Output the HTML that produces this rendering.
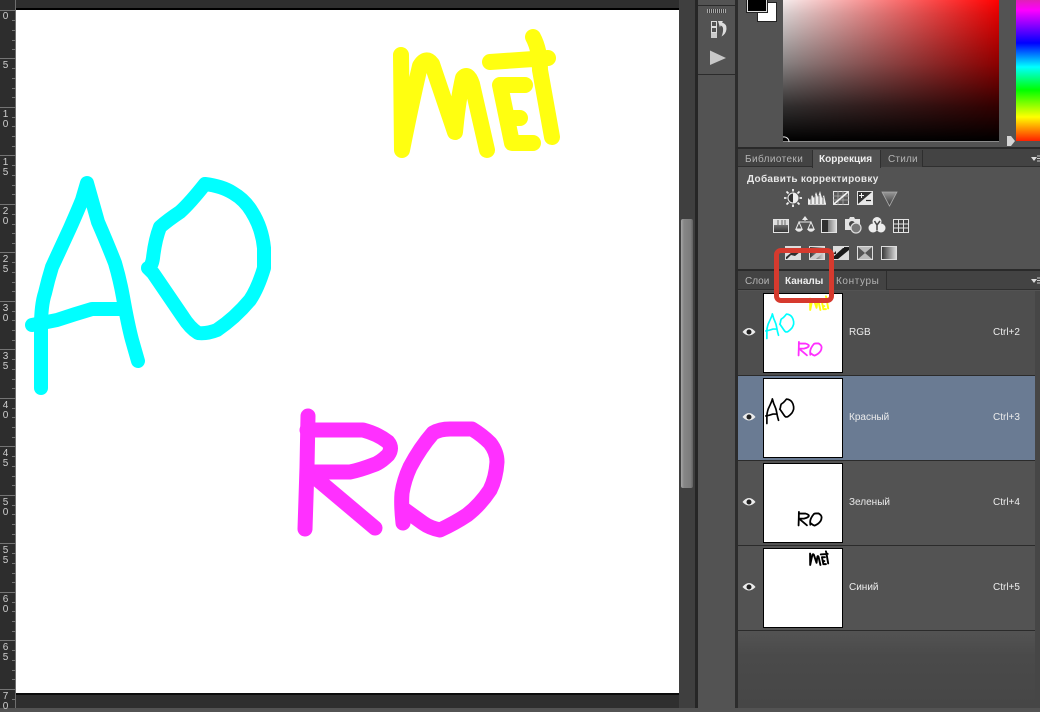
<!DOCTYPE html>
<html><head><meta charset="utf-8">
<style>
html,body{margin:0;padding:0;width:1040px;height:708px;overflow:hidden;background:#535353;font-family:"Liberation Sans",sans-serif}
.a{position:absolute}
.t{position:absolute;font-size:10px;line-height:12px;white-space:nowrap;color:#b4b4b4}
.b{font-weight:bold;color:#eee}
.tab{position:absolute;background:#434343;border-right:1px solid #2e2e2e;box-sizing:border-box}
.row{position:absolute;left:738px;width:297px;height:84px;background:#535353;border-bottom:1px solid #2b2b2b;box-sizing:content-box}
.th{position:absolute;left:763px;width:78px;height:78px;border:1px solid #000;background:#fff}
.lb{position:absolute;left:849px;font-size:10px;line-height:12px;color:#ececec;white-space:nowrap}
.sc{position:absolute;left:993px;font-size:10px;line-height:12px;color:#ececec;white-space:nowrap}
.d{position:absolute;left:1px;width:9px;font-size:10px;line-height:10px;color:#cfcfcf;text-align:center}
</style></head><body>

<!-- top band and canvas area -->
<div class="a" style="left:0;top:0;width:696px;height:708px;background:#2f2f2f"></div>
<div class="a" style="left:16px;top:0;width:663px;height:9px;background:#2e2e2e"></div>
<div class="a" style="left:16px;top:8px;width:663px;height:2px;background:#000"></div>
<div class="a" style="left:16px;top:693px;width:663px;height:2px;background:#0c0c0c"></div>

<!-- ruler -->
<div class="a" style="left:0;top:0;width:16px;height:708px;background:#2d2d2d;border-right:1px solid #6e6e6e;box-sizing:border-box"></div>
<svg class="a" style="left:0;top:0" width="16" height="708">
<g stroke="#747474" stroke-width="1">
<path d="M0 10.500H16M0 58.500H16M0 107.500H16M0 155.500H16M0 204.500H16M0 252.500H16M0 301.500H16M0 349.500H16M0 398.500H16M0 446.500H16M0 495.500H16M0 543.500H16M0 592.500H16M0 640.500H16M0 689.500H16"/>
<path d="M12 20.500H16M12 30.500H16M12 40.500H16M12 49.500H16M12 68.500H16M12 78.500H16M12 88.500H16M12 97.500H16M12 117.500H16M12 126.500H16M12 136.500H16M12 146.500H16M12 165.500H16M12 175.500H16M12 185.500H16M12 194.500H16M12 214.500H16M12 224.500H16M12 233.500H16M12 243.500H16M12 262.500H16M12 272.500H16M12 282.500H16M12 291.500H16M12 311.500H16M12 320.500H16M12 330.500H16M12 340.500H16M12 359.500H16M12 369.500H16M12 379.500H16M12 388.500H16M12 408.500H16M12 417.500H16M12 427.500H16M12 437.500H16M12 456.500H16M12 466.500H16M12 476.500H16M12 485.500H16M12 505.500H16M12 514.500H16M12 524.500H16M12 534.500H16M12 553.500H16M12 563.500H16M12 573.500H16M12 582.500H16M12 602.500H16M12 611.500H16M12 621.500H16M12 631.500H16M12 650.500H16M12 660.500H16M12 670.500H16M12 679.500H16M12 699.500H16"/>
</g></svg>
<div class="d" style="top:12px">0</div>
<div class="d" style="top:61px">5</div>
<div class="d" style="top:110px">1</div><div class="d" style="top:120px">0</div>
<div class="d" style="top:158px">1</div><div class="d" style="top:168px">5</div>
<div class="d" style="top:207px">2</div><div class="d" style="top:217px">0</div>
<div class="d" style="top:255px">2</div><div class="d" style="top:265px">5</div>
<div class="d" style="top:304px">3</div><div class="d" style="top:314px">0</div>
<div class="d" style="top:352px">3</div><div class="d" style="top:362px">5</div>
<div class="d" style="top:401px">4</div><div class="d" style="top:411px">0</div>
<div class="d" style="top:449px">4</div><div class="d" style="top:459px">5</div>
<div class="d" style="top:498px">5</div><div class="d" style="top:508px">0</div>
<div class="d" style="top:546px">5</div><div class="d" style="top:556px">5</div>
<div class="d" style="top:595px">6</div><div class="d" style="top:605px">0</div>
<div class="d" style="top:643px">6</div><div class="d" style="top:653px">5</div>
<div class="d" style="top:692px">7</div><div class="d" style="top:702px">0</div>

<!-- canvas -->
<svg class="a" style="left:16px;top:10px" width="663" height="683" viewBox="16 10 663 683">
<defs>
<g id="ao" fill="none" stroke="#00ffff" stroke-width="14" stroke-linecap="round" stroke-linejoin="round">
<path d="M41 388L41 327Q41 305 45 293Q48 280 52 267L70 228Q78 210 82 200L87 183L98 222Q108 245 115 263Q120 280 123 297Q128 325 132 340L138 361"/>
<path d="M32 325L57 320Q75 314 92 309L120 309"/>
<path d="M148 268Q152 266 153 258Q155 240 160 227Q168 220 180 212Q190 203 205 184Q222 186 233 193Q245 200 252 212Q262 228 264 248L264 268Q258 288 250 300Q235 318 217 330Q207 334 198 333Q190 328 183 317L153 273Z"/>
</g>
<g id="ro" fill="none" stroke="#ff30ff" stroke-width="15" stroke-linecap="round" stroke-linejoin="round">
<path d="M308 416L307 467L305 529"/>
<path d="M307 430L363 430Q378 434 388 442Q393 448 388 455Q380 463 373 465Q360 470 350 472L310 472"/>
<path d="M318 480L375 528"/>
<path d="M403 523Q401 505 402 493Q404 480 410 467Q420 448 433 433Q440 429 450 429L472 429Q482 435 490 443Q497 452 497 462Q496 478 490 490Q480 505 467 515Q455 523 440 530Q430 528 423 523L405 510"/>
</g>
<g id="met" fill="none" stroke="#ffff10" stroke-width="16" stroke-linecap="round" stroke-linejoin="round">
<path d="M401 55L402 150Q412 100 420 66Q426 56 432 64L455 132Q458 100 463 78Q468 72 472 84L487 150"/>
<path d="M500 85L525 85M500 85L512 143L533 143M512 118L520 118"/>
<path d="M533 37Q540 50 540 70L552 137M490 62L548 58"/>
</g>
</defs>
<rect x="16" y="10" width="663" height="683" fill="#fff"/>
<use href="#ao"/><use href="#ro"/><use href="#met"/>
</svg>

<!-- scrollbar -->
<div class="a" style="left:679px;top:0;width:17px;height:708px;background:#3f3f3f;box-sizing:border-box;border-right:1px solid #333"></div>
<div class="a" style="left:681px;top:219px;width:12px;height:269px;border-radius:2px;background:linear-gradient(to right,#a5a5a5,#868686 25%,#7c7c7c 80%,#606060)"></div>

<!-- dock strip -->
<div class="a" style="left:695px;top:0;width:3px;height:708px;background:#262626"></div>
<div class="a" style="left:698px;top:0;width:38px;height:708px;background:#535353"></div>
<div class="a" style="left:735px;top:0;width:3px;height:708px;background:#2c2c2c"></div>
<div class="a" style="left:698px;top:5px;width:38px;height:1px;background:#2b2b2b"></div>
<div class="a" style="left:698px;top:74px;width:38px;height:1px;background:#2b2b2b"></div>
<div class="a" style="left:707px;top:9px;width:19px;height:4px;background:repeating-linear-gradient(to right,#a8a8a8 0 1px,#3a3a3a 1px 2px)"></div>
<svg class="a" style="left:708px;top:18px" width="22" height="22">
<rect x="3.500" y="3.500" width="5" height="5" fill="none" stroke="#ddd"/>
<rect x="3.500" y="9.500" width="5" height="5" fill="none" stroke="#ddd"/>
<rect x="3" y="15" width="6" height="5" fill="#ccc"/>
<path d="M10 3L15 3L14 4.500Q19 6 18.500 11Q18 16 13.500 18.500Q15.500 14 15 10Q14.500 8 12.500 7.500L12 9.500Z" fill="#ddd"/>
</svg>
<svg class="a" style="left:708px;top:49px" width="20" height="17">
<path d="M2 1.500L18 9L2 16Z" fill="#c8c8c8"/>
</svg>

<!-- right panel -->
<div class="a" style="left:738px;top:0;width:302px;height:148px;background:#535353"></div>
<div class="a" style="left:757px;top:2px;width:20px;height:20px;background:#fff;border:1px solid #222;box-sizing:border-box"></div>
<div class="a" style="left:747px;top:-8px;width:20px;height:20px;background:#000;border:1px solid #ddd;outline:1px solid #222;box-sizing:border-box"></div>

<div class="a" style="left:783px;top:0;width:216px;height:141px;background:linear-gradient(to bottom,rgba(0,0,0,0) 0,rgba(0,0,0,.12) 10%,rgba(0,0,0,.45) 45%,rgba(0,0,0,.8) 75%,#000 100%),linear-gradient(to right,#f4ecec,#ff0000)"></div>
<div class="a" style="left:783px;top:141px;width:216px;height:1px;background:#8a8a8a"></div>
<svg class="a" style="left:782px;top:135px" width="10" height="7"><path d="M1 2A5 5 0 0 1 7 7" fill="none" stroke="#eee" stroke-width="1"/></svg>
<svg class="a" style="left:1006px;top:136px" width="10" height="11"><path d="M1 0H5L9 5L5 10H1Z" fill="#d5d5d5"/></svg>
<div class="a" style="left:1016px;top:0;width:24px;height:141px;background:linear-gradient(to bottom,#e020b8 0,#ff00ff 10px,#0000ff 43px,#00ffff 67px,#00ff00 90px,#ffff00 117px,#ff2000 141px)"></div>

<!-- adjustments panel -->
<div class="a" style="left:736px;top:147px;width:304px;height:2px;background:#2a2a2a"></div>
<div class="a" style="left:738px;top:149px;width:302px;height:18px;background:#434343;border-bottom:1px solid #2f2f2f;box-sizing:border-box"></div>
<div class="tab" style="left:881px;top:150px;width:42px;height:17px"></div>
<div class="a" style="left:812px;top:150px;width:69px;height:18px;background:#535353;border-left:1px solid #2f2f2f;border-right:1px solid #2f2f2f;box-sizing:border-box"></div>
<div class="t" style="left:745px;top:154px;letter-spacing:.4px">Библиотеки</div>
<div class="t b" style="left:819px;top:154px">Коррекция</div>
<div class="t" style="left:888px;top:154px;letter-spacing:.2px">Стили</div>
<svg class="a" style="left:1031px;top:155px" width="9" height="8"><path d="M0 2H6L3 6Z" fill="#ddd"/><path d="M6 1H9M6 3.500H9M6 6H9" stroke="#ccc"/></svg>
<div class="t b" style="left:747px;top:174px;letter-spacing:.3px;color:#e8e8e8">Добавить корректировку</div>

<svg class="a" style="left:770px;top:185px" width="145" height="80" viewBox="770 185 145 80">
<defs>
<linearGradient id="g1" x1="0" x2="1"><stop offset="0" stop-color="#333"/><stop offset="1" stop-color="#ddd"/></linearGradient>
<linearGradient id="g2" x1="0" x2="0" y1="0" y2="1"><stop offset="0" stop-color="#999"/><stop offset="1" stop-color="#333"/></linearGradient>
</defs>
<!-- row 1 -->
<circle cx="793" cy="198" r="5.500" fill="#eee"/><path d="M793 193.500A4.500 4.500 0 0 0 793 202.500Z" fill="#333"/>
<path d="M793 189V191.500M793 204.500V207M784 198H786.500M799.500 198H802M786.500 191.500L788.500 193.500M799.500 191.500L797.500 193.500M786.500 204.500L788.500 202.500M799.500 204.500L797.500 202.500" stroke="#f0f0f0" stroke-width="1.800"/>
<path d="M808 204V198L810 200L812 195L814 198L816 192L818 197L820 191L822 198L824 195L826 204Z" fill="#eee"/>
<path d="M808 204H826" stroke="#f2f2f2" stroke-width="1.500"/>
<path d="M811 197V204M815 195V204M819 195V204M823 197V204" stroke="#555" stroke-width=".8"/>
<rect x="833.500" y="191.500" width="15" height="13" fill="#5a5a5a" stroke="#e4e4e4"/>
<path d="M833 196H849M833 200H849M838 191V205M843 191V205" stroke="#aaa" stroke-width=".8"/>
<path d="M834 204L841 198L848 192" stroke="#f2f2f2" stroke-width="1.600" fill="none"/>
<rect x="857.500" y="191.500" width="15" height="13" fill="#333" stroke="#e4e4e4"/>
<path d="M858 204L872 192V204Z" fill="#e8e8e8"/>
<path d="M859 195.500H864M861.500 193V198" stroke="#f2f2f2"/><path d="M866 200.500H871" stroke="#222" stroke-width="1.200"/>
<path d="M882 192H897L889.500 206Z" fill="url(#g2)" stroke="#aaa" stroke-width=".8"/>
<!-- row 2 -->
<rect x="773.500" y="219.500" width="15" height="13" fill="url(#g2)" stroke="#e4e4e4"/>
<rect x="774" y="220" width="14" height="5" fill="#ddd"/><path d="M778 220V225M782 220V225M785 220V225" stroke="#666"/>
<path d="M805 218V221M799 222H811M799 222L796 229H802ZM811 222L808 229H814Z" fill="none" stroke="#e8e8e8"/>
<path d="M796 229.500Q799 233 802 229.500ZM808 229.500Q811 233 814 229.500Z" fill="#e8e8e8" stroke="#e8e8e8"/>
<path d="M802 220L805 216L808 220Z" fill="#e8e8e8"/>
<rect x="821.500" y="219.500" width="15" height="13" fill="url(#g1)" stroke="#e4e4e4"/><rect x="822" y="220" width="6" height="12" fill="#2f2f2f"/>
<path d="M845 219H849L850 217H854L855 219H860V230H845Z" fill="#e4e4e4"/><circle cx="852" cy="224" r="3" fill="#444"/>
<circle cx="856" cy="228" r="5" fill="#777" stroke="#ddd" stroke-width="1.200"/>
<circle cx="877" cy="221.500" r="4.500" fill="#ececec"/><circle cx="873" cy="228" r="4.500" fill="#ececec"/><circle cx="881" cy="228" r="4.500" fill="#ececec"/>
<path d="M877 225L874.500 221M877 225V230M877 225L880 221" stroke="#444" stroke-width="1.500"/>
<rect x="893.500" y="219.500" width="15" height="13" fill="#444" stroke="#e4e4e4"/>
<path d="M894 224H908M894 228H908M898.500 219V233M903.500 219V233" stroke="#e4e4e4"/>
<!-- row 3 -->
<rect x="785.500" y="246.500" width="15" height="13" fill="#ddd" stroke="#ddd"/><path d="M786 257L792 252L795 253L800 249V252L795 256L791 255L787 259H786Z" fill="#2e2e2e"/>
<rect x="809.500" y="246.500" width="15" height="13" fill="url(#g1)" stroke="#ddd"/><path d="M810 258L824 247V252L816 259H810Z" fill="#ccc"/>
<rect x="833.500" y="246.500" width="15" height="13" fill="#ddd" stroke="#ddd"/><path d="M833 257L843 248H849V250L838 259H833Z" fill="#1c1c1c"/><path d="M844 247H849V248H844ZM833 254L836 251V254Z" fill="#222"/>
<rect x="857.500" y="246.500" width="15" height="13" fill="#bbb" stroke="#ddd"/><path d="M858 247L865 253L858 259ZM872 247L865 253L872 259Z" fill="#555"/>
<rect x="881.500" y="246.500" width="15" height="13" fill="url(#g1)" stroke="#ddd"/>
</svg>

<!-- channels panel -->
<div class="a" style="left:736px;top:269px;width:304px;height:2px;background:#2a2a2a"></div>
<div class="a" style="left:738px;top:271px;width:302px;height:19px;background:#434343;border-bottom:1px solid #2f2f2f;box-sizing:border-box"></div>
<div class="tab" style="left:831px;top:271px;width:56px;height:19px"></div>
<div class="a" style="left:779px;top:271px;width:52px;height:20px;background:#535353"></div>
<div class="t" style="left:745px;top:276px">Слои</div>
<div class="t b" style="left:785px;top:276px">Каналы</div>
<div class="t" style="left:836px;top:276px;letter-spacing:.6px">Контуры</div>
<svg class="a" style="left:1031px;top:277px" width="9" height="8"><path d="M0 2H6L3 6Z" fill="#ddd"/><path d="M6 1H9M6 3.500H9M6 6H9" stroke="#ccc"/></svg>

<div class="a" style="left:738px;top:291px;width:297px;height:417px;background:linear-gradient(to bottom,#535353 0,#535353 340px,#4a4a4a 365px,#464646 417px)"></div>
<div class="a" style="left:1035px;top:291px;width:5px;height:417px;background:#464646"></div>
<div class="row" style="top:291px;background:#4e4e4e"></div>
<div class="row" style="top:376px;background:#6a7b93"></div>
<div class="row" style="top:461px"></div>
<div class="row" style="top:546px"></div>

<div class="th" style="top:293px"><svg width="78" height="78" viewBox="17 17 650 650"><use href="#ao"/><use href="#ro"/><use href="#met"/></svg></div>
<div class="th" style="top:378px"><svg width="78" height="78" viewBox="17 17 650 650"><g style="filter:brightness(0)"><use href="#ao"/></g></svg></div>
<div class="th" style="top:463px"><svg width="78" height="78" viewBox="17 17 650 650"><g style="filter:brightness(0)"><use href="#ro"/></g></svg></div>
<div class="th" style="top:548px"><svg width="78" height="78" viewBox="17 17 650 650"><g style="filter:brightness(0)"><use href="#met"/></g></svg></div>

<svg class="a" style="left:742px;top:326px" width="14" height="12"><path d="M.5 6Q7 -2 13.500 6Q7 13 .5 6Z" fill="#ececec"/><circle cx="7" cy="6" r="2.500" fill="#222"/></svg>
<svg class="a" style="left:742px;top:411px" width="14" height="12"><path d="M.5 6Q7 -2 13.500 6Q7 13 .5 6Z" fill="#ececec"/><circle cx="7" cy="6" r="2.500" fill="#222"/></svg>
<svg class="a" style="left:742px;top:496px" width="14" height="12"><path d="M.5 6Q7 -2 13.500 6Q7 13 .5 6Z" fill="#ececec"/><circle cx="7" cy="6" r="2.500" fill="#222"/></svg>
<svg class="a" style="left:742px;top:581px" width="14" height="12"><path d="M.5 6Q7 -2 13.500 6Q7 13 .5 6Z" fill="#ececec"/><circle cx="7" cy="6" r="2.500" fill="#222"/></svg>

<div class="lb" style="top:327px">RGB</div><div class="sc" style="top:327px">Ctrl+2</div>
<div class="lb" style="top:412px">Красный</div><div class="sc" style="top:412px">Ctrl+3</div>
<div class="lb" style="top:497px">Зеленый</div><div class="sc" style="top:497px">Ctrl+4</div>
<div class="lb" style="top:582px">Синий</div><div class="sc" style="top:582px">Ctrl+5</div>

<!-- red highlight -->
<div class="a" style="left:774px;top:248px;width:60px;height:55px;box-sizing:border-box;border:5px solid #d63a2e;border-radius:7px"></div>
</body></html>
